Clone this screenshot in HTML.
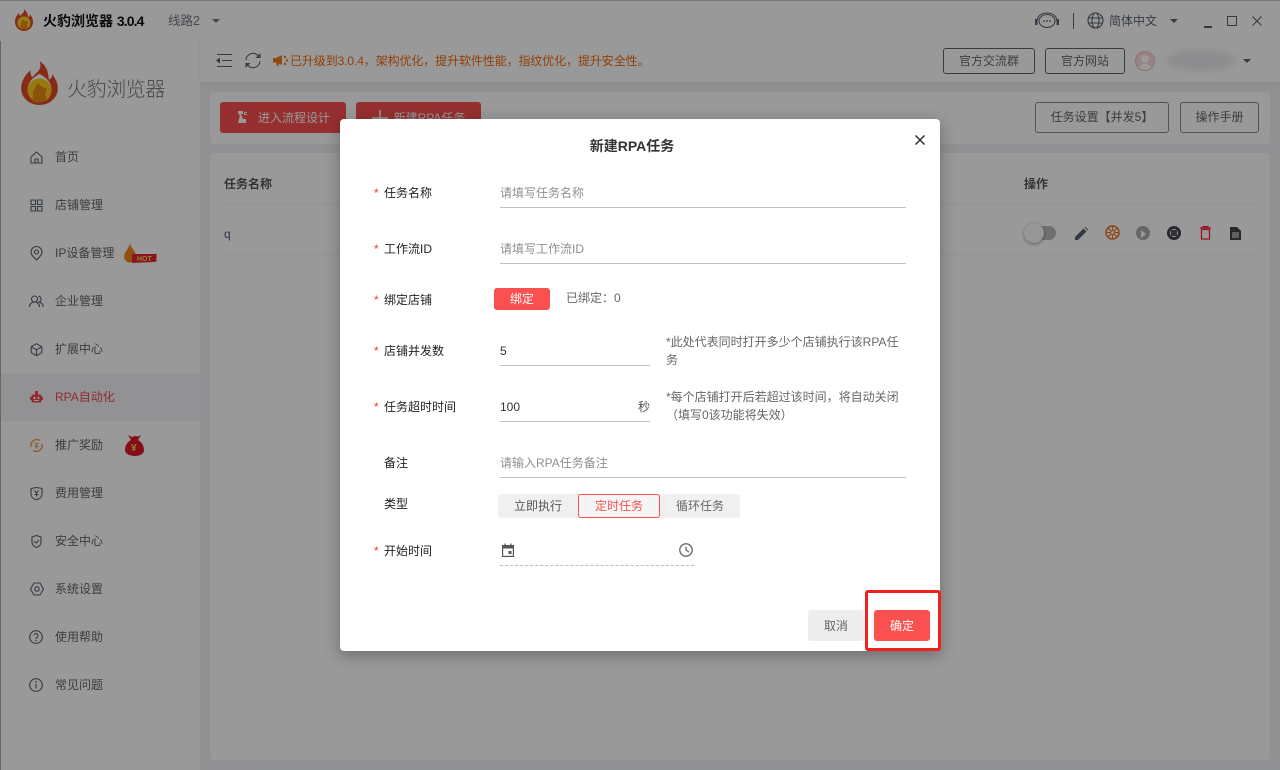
<!DOCTYPE html>
<html lang="zh"><head><meta charset="utf-8"><title>火豹浏览器</title>
<style>
*{box-sizing:border-box;margin:0;padding:0}
html,body{width:1280px;height:770px;overflow:hidden;background:#f0f1f3}
body{position:relative;font:12px/18px "Liberation Sans","Noto Sans CJK SC",sans-serif;color:#333}
.a{position:absolute;white-space:nowrap}
svg{position:absolute;display:block;overflow:visible}
.s{fill:none;stroke:#5a6470;stroke-width:1.1}
.b{position:absolute;border:1px solid #5a6470;border-radius:3px;text-align:center;color:#666a70;background:transparent}
.r{position:absolute;background:#fb5050;border-radius:3px;color:#fff;text-align:center}
.n{position:absolute;left:55px;color:#666;white-space:nowrap}
.i{position:absolute;left:30px;width:13px;height:13px}
.lb{position:absolute;left:44px;color:#222;white-space:nowrap}
.st{position:absolute;left:34px;color:#f33;font-size:12px}
.ln{position:absolute;height:1px;background:#c2c2c2}
.ph{position:absolute;color:#8f8f8f;white-space:nowrap}
.hint{position:absolute;left:326px;color:#666;white-space:nowrap;line-height:18px}
</style></head><body>
<!-- title bar -->
<div class="a" style="left:0;top:0;width:1280px;height:41px;background:#fff;border-top:1px solid #ccc;box-shadow:0 1px 3px rgba(0,0,0,.12)"></div>
<svg style="left:14px;top:8px" width="20" height="24" viewBox="0 0 20 24"><path d="M10 1C11 5 8 5 6 8 5 6 5 5 5 5 2 8 1 11 1 14c0 5 4 9 9 9s9-4 9-9c0-4-2-6-3-8 0 2-1 3-2 3 0-4-2-6-4-8z" fill="#e2492a"/><circle cx="10" cy="15" r="6.5" fill="#fbd01e"/><path d="M6 20c1-3 0-5 2-7l1-2 2 2 3 1-1 3 1 4c-2 1-6 1-8-1z" fill="#e68a10"/></svg>
<div class="a" style="left:43px;top:12px;font-size:14px;font-weight:700;color:#111">火豹浏览器 <span style="letter-spacing:-.9px">3.0.4</span></div>
<div class="a" style="left:168px;top:12px;font-size:12.5px;color:#778">线路2</div>
<div class="a" style="left:212px;top:19px;border:4px solid transparent;border-top:4px solid #778;border-bottom:0"></div>
<svg style="left:1034px;top:11px" width="26" height="20" viewBox="0 0 26 20"><path class="s" d="M3 11C3 5 7 2 13 2s10 3 10 9"/><ellipse class="s" cx="13" cy="10" rx="8" ry="6.5"/><rect x="1" y="8" width="2.5" height="6" fill="#5a6470"/><rect x="22.5" y="8" width="2.5" height="6" fill="#5a6470"/><circle cx="10" cy="10" r=".9" fill="#5a6470"/><circle cx="13" cy="10" r=".9" fill="#5a6470"/><circle cx="16" cy="10" r=".9" fill="#5a6470"/></svg>
<div class="a" style="left:1073px;top:13px;width:1px;height:16px;background:#666"></div>
<svg style="left:1087px;top:12px" width="17" height="17" viewBox="0 0 17 17"><circle class="s" cx="8.5" cy="8.5" r="7.5"/><ellipse class="s" cx="8.5" cy="8.5" rx="3.5" ry="7.5"/><path class="s" d="M1.5 6h14M1.5 11h14"/></svg>
<div class="a" style="left:1109px;top:12px;font-size:12px;color:#5c6570">简体中文</div>
<div class="a" style="left:1170px;top:19px;border:4px solid transparent;border-top:4px solid #5c6570;border-bottom:0"></div>
<div class="a" style="left:1204px;top:26px;width:8px;height:1.5px;background:#5a6470"></div>
<div class="a" style="left:1227px;top:16px;width:10px;height:10px;border:1.5px solid #5a6470"></div>
<svg style="left:1252px;top:16px" width="10" height="10" viewBox="0 0 10 10"><path class="s" d="M.5.5l9 9M9.5.5l-9 9"/></svg>
<!-- sidebar -->
<div class="a" style="left:0;top:41px;width:200px;height:729px;background:#fff;border-left:1px solid #aaa"></div>
<div class="a" style="left:1px;top:373px;width:199px;height:48px;background:#f3f4f7"></div>
<svg style="left:21px;top:61px" width="37" height="44" viewBox="0 0 20 24"><path d="M10 0C12 5 8 6 6 9 5 7 5 6 5 5 2 8 0 11 0 15c0 5 4.500 9 10 9s10-4 10-9c0-4-2-6-3-8 0 2-1 3-2 3 0-5-2-8-5-10z" fill="#e2492a"/><path d="M10 7c-4 2-6.500 5-6.500 8.500S6 22.500 10 22.500s6.500-3 6.500-7C16.500 12 14 9 10 7z" fill="#fff"/><circle cx="10" cy="16" r="6.500" fill="#fbc91e"/><path d="M6 22c1-3-.5-5 1.500-7l1.500-3 2 2 3 1-1 3 1 3c-2 2-6 2-8 1z" fill="#e78a10"/></svg>
<div class="a" style="left:67px;top:77px;font-size:20px;line-height:26px;color:#777;font-weight:300;letter-spacing:-.4px">火豹浏览器</div>
<div class="n" style="top:148px">首页</div>
<svg class="i" style="top:151px" viewBox="0 0 13 13"><path class="s" d="M1 6l5.500-5L12 6v6H1zM5 12V8h3v4"/></svg>
<div class="n" style="top:196px">店铺管理</div>
<svg class="i" style="top:199px" viewBox="0 0 13 13"><path class="s" d="M1 1h4.500v4.500H1zM7.500 1H12v4.500H7.500zM1 7.500h4.500V12H1zM7.500 7.500H12V12H7.500z"/></svg>
<div class="n" style="top:244px">IP设备管理</div>
<svg class="i" style="top:246px;height:15px" viewBox="0 0 13 15"><path class="s" d="M6.500 14C3 10.500 1 8.500 1 6a5.500 5.500 0 0 1 11 0c0 2.500-2 4.500-5.500 8z"/><circle class="s" cx="6.500" cy="6" r="2"/></svg>
<svg style="left:124px;top:243px" width="34" height="21" viewBox="0 0 34 21"><path d="M6 0c0 4 6 8 6 13a6 6 0 0 1-12 1C0 9 5 6 6 0z" fill="#f0881c"/><path d="M8 11h25l-1 2 1 1-1 2 1 2-3 1-22 1z" fill="#e6223a"/><text x="13" y="18" font-size="7" font-weight="700" fill="#fbd84a" font-family="Liberation Sans">HOT</text></svg>
<div class="n" style="top:292px">企业管理</div>
<svg class="i" style="top:295px;width:15px;left:29px" viewBox="0 0 15 13"><circle class="s" cx="5.500" cy="4" r="3"/><path class="s" d="M.5 12c0-3 2-5 5-5s5 2 5 5M9.500 1.200A3 3 0 0 1 10 7c2.500.5 4 2.500 4.200 5"/></svg>
<div class="n" style="top:340px">扩展中心</div>
<svg class="i" style="top:343px" viewBox="0 0 13 13"><path class="s" d="M6.500.7l5.300 3v6l-5.300 3-5.300-3v-6zM1.200 3.700l5.300 3 5.300-3M6.500 6.700v6"/></svg>
<div class="n" style="top:388px;color:#f04a50">RPA自动化</div>
<svg class="i" style="top:391px" viewBox="0 0 13 13"><rect x="1.500" y="3.500" width="10" height="8" rx="1.500" fill="#f04a50"/><path d="M5 0h3v3.500H5zM0 6h1.500v3H0zM11.500 6H13v3h-1.500z" fill="#f04a50"/><circle cx="4.500" cy="7" r="1.100" fill="#fff"/><circle cx="8.500" cy="7" r="1.100" fill="#fff"/><path d="M4 9.500h5" stroke="#fff"/></svg>
<div class="n" style="top:436px">推广奖励</div>
<svg class="i" style="top:438px;width:15px;height:15px;left:29px" viewBox="0 0 15 15"><path d="M2 9A6 6 0 0 1 11 2.500M13 6a6 6 0 0 1-9 6.500" fill="none" stroke="#e8913a" stroke-width="1.300"/><path d="M5.500 4.500l2 2.500 2-2.500M7.500 7v3.500M5.500 8.500h4" fill="none" stroke="#e8913a"/></svg>
<svg style="left:125px;top:434px" width="20" height="23" viewBox="0 0 20 23"><path d="M3 1l4 2 3-1 3 .5 3-1.500-3 5c4 2 6 6 6 10 0 4-4 6-9 6s-10-2-10-6c0-4 2-8 6-10z" fill="#e0182c"/><text x="6" y="17" font-size="10" font-weight="700" fill="#fbd338" font-family="Liberation Sans">¥</text></svg>
<div class="n" style="top:484px">费用管理</div>
<svg class="i" style="top:487px" viewBox="0 0 13 13"><path class="s" d="M1 1.500l5.500-1 5.500 1V7c0 3-2.500 5-5.500 5.700C3.500 12 1 10 1 7z"/><path class="s" d="M4.500 3.500l2 2.500 2-2.500M6.500 6v3.500M4.500 7.500h4" stroke-width="1"/></svg>
<div class="n" style="top:532px">安全中心</div>
<svg class="i" style="top:535px" viewBox="0 0 13 13"><path class="s" d="M2 2l4.500-1.500L11 2v5c0 3-2 4.700-4.500 5.500C4 11.700 2 10 2 7z"/><path class="s" d="M4.200 6.300L6 8l3-3"/></svg>
<div class="n" style="top:580px">系统设置</div>
<svg class="i" style="top:582px;height:14px;width:14px" viewBox="0 0 14 14"><path class="s" d="M4 1h6l3.500 6L10 13H4L.5 7z"/><circle class="s" cx="7" cy="7" r="2.200"/></svg>
<div class="n" style="top:628px">使用帮助</div>
<svg class="i" style="top:630px;width:14px;height:14px;left:29px" viewBox="0 0 14 14"><circle class="s" cx="7" cy="7" r="6.300"/><path class="s" d="M5 5.500a2 2 0 1 1 3 1.800c-.8.500-1 1-1 1.700"/><circle cx="7" cy="10.500" r=".8" fill="#5a6470"/></svg>
<div class="n" style="top:676px">常见问题</div>
<svg class="i" style="top:678px;width:14px;height:14px;left:29px" viewBox="0 0 14 14"><circle class="s" cx="7" cy="7" r="6.300"/><path class="s" d="M7 6v4.500"/><circle cx="7" cy="4" r=".9" fill="#5a6470"/></svg>
<!-- header -->
<div class="a" style="left:200px;top:41px;width:1080px;height:41px;background:#fff;box-shadow:0 1px 3px rgba(0,0,0,.08)"></div>
<svg style="left:216px;top:53px" width="17" height="15" viewBox="0 0 17 15"><path class="s" d="M1 1.500h15M6 7.500h10M1 13.500h15"/><path d="M4 4.500L0 7.500l4 3z" fill="#5a6470"/></svg>
<svg style="left:244px;top:52px" width="18" height="17" viewBox="0 0 18 17"><path class="s" d="M2 8a7 7 0 0 1 12-4.500L15.500 5M16 9a7 7 0 0 1-12 4.500L2.500 12"/><path d="M16.500 1v5h-5zM1.500 16v-5h5z" fill="#5a6470"/></svg>
<svg style="left:273px;top:55px" width="16" height="12" viewBox="0 0 16 12"><path d="M0 3h3l6-3v10L3 7.500H0z" fill="#f07a1c"/><path d="M3 8l1 3h2L5 8z" fill="#f07a1c"/><circle cx="12" cy="2" r="1.200" fill="#f07a1c"/><circle cx="14" cy="5.500" r="1.200" fill="#f07a1c"/><circle cx="12" cy="9" r="1.200" fill="#f07a1c"/></svg>
<div class="a" style="left:290px;top:52px;color:#f06a10;letter-spacing:-.1px">已升级到3.0.4，架构优化，提升软件性能，指纹优化，提升安全性。</div>
<div class="b" style="left:943px;top:48px;width:92px;height:26px;line-height:24px">官方交流群</div>
<div class="b" style="left:1045px;top:48px;width:80px;height:26px;line-height:24px">官方网站</div>
<div class="a" style="left:1135px;top:51px;width:20px;height:20px;border-radius:50%;background:#fbdcdc;border:1px solid #f3b9b9;overflow:hidden"><div class="a" style="left:5px;top:3px;width:8px;height:8px;border-radius:50%;background:#fff"></div><div class="a" style="left:2px;top:12px;width:14px;height:10px;border-radius:50%;background:#fff"></div></div>
<div class="a" style="left:1166px;top:50px;width:70px;height:21px;background:#ececf0;border-radius:50%;filter:blur(3px)"></div>
<div class="a" style="left:1243px;top:59px;border:4px solid transparent;border-top:4px solid #5c6570;border-bottom:0"></div>
<!-- content -->
<div class="a" style="left:210px;top:92px;width:1060px;height:52px;background:#fff;border-radius:4px"></div>
<div class="r" style="left:220px;top:102px;width:126px;height:31px;line-height:32px;padding-left:22px">进入流程设计</div>
<svg style="left:237px;top:110px" width="13" height="14" viewBox="0 0 13 14"><path d="M1 1h5v3H4l2 5h3v4H1l1-4 1-3-2-3zM7 2h3v1H8v1h2v1H7z" fill="#fff"/></svg>
<div class="r" style="left:356px;top:102px;width:125px;height:31px;line-height:32px;padding-left:22px">新建RPA任务</div>
<svg style="left:372px;top:110px" width="16" height="16" viewBox="0 0 16 16"><path d="M8 0v16M0 8h16" stroke="#fff" stroke-width="1.500"/></svg>
<div class="b" style="left:1035px;top:102px;width:134px;height:31px;line-height:29px;border-color:#888;color:#666">任务设置【并发5】</div>
<div class="b" style="left:1180px;top:102px;width:79px;height:31px;line-height:29px;border-color:#888;color:#666">操作手册</div>
<div class="a" style="left:210px;top:153px;width:1060px;height:607px;background:#fff;border-radius:4px"></div>
<div class="a" style="left:220px;top:166px;width:1040px;height:37px;background:#fff;box-shadow:0 1px 2px rgba(0,0,0,.04);border-radius:4px"></div>
<div class="a" style="left:220px;top:216px;width:1040px;height:37px;background:#fff;box-shadow:0 1px 2px rgba(0,0,0,.04);border-radius:4px"></div>
<div class="a" style="left:224px;top:175px;font-weight:700;color:#555">任务名称</div>
<div class="a" style="left:1024px;top:175px;font-weight:700;color:#555">操作</div>
<div class="a" style="left:224px;top:225px;color:#557">q</div>
<div class="a" style="left:1028px;top:226px;width:28px;height:14px;border-radius:7px;background:#bbb"></div>
<div class="a" style="left:1024px;top:223px;width:20px;height:20px;border-radius:50%;background:#fafafa;box-shadow:0 1px 3px rgba(0,0,0,.4)"></div>
<svg style="left:1075px;top:227px" width="13" height="13" viewBox="0 0 13 13"><path d="M0 13V10L8.500 1.500l3 3L3 13zM9.500.5l1-.5 2.500 2.500-.5 1z" fill="#55606e"/></svg>
<svg style="left:1105px;top:225px" width="15" height="15" viewBox="0 0 15 15"><circle cx="7.500" cy="7.500" r="6.500" fill="none" stroke="#f0701c" stroke-width="1.500"/><circle cx="7.500" cy="7.500" r="2" fill="none" stroke="#f0701c"/><path d="M7.500 1v4.500M7.500 9.500V14M1 7.500h4.500M9.500 7.500H14M3 3l3 3M9 9l3 3M12 3L9 6M6 9l-3 3" stroke="#f0701c"/></svg>
<div class="a" style="left:1136px;top:226px;width:14px;height:14px;border-radius:50%;background:#aaa"></div>
<div class="a" style="left:1141px;top:229.500px;border:4px solid transparent;border-left:5px solid #fff;border-right:0"></div>
<div class="a" style="left:1167px;top:226px;width:14px;height:14px;border-radius:50%;background:#fff;border:3px solid #445"></div>
<div class="a" style="left:1171px;top:230px;width:6px;height:6px;background:#555"></div>
<svg style="left:1200px;top:226px" width="11" height="14" viewBox="0 0 11 14"><path d="M0 2h11M3 2V.7h5V2M1.500 3.500h8V13h-8z" fill="none" stroke="#ff1e34" stroke-width="1.300"/></svg>
<svg style="left:1230px;top:227px" width="11" height="13" viewBox="0 0 11 13"><path d="M0 0h7l4 4v9H0z" fill="#444"/><path d="M2 6h7M2 8h7M2 10h7" stroke="#fff" stroke-width=".9"/></svg>
<!-- overlay -->
<div class="a" style="left:0;top:0;width:1280px;height:770px;background:rgba(0,0,0,.4)"></div>
<!-- dialog -->
<div class="a" style="left:340px;top:119px;width:600px;height:532px;background:#fff;border-radius:4px;box-shadow:0 4px 16px rgba(0,0,0,.3);white-space:normal">
<div class="a" style="left:192px;width:200px;top:17px;text-align:center;font-size:14px;line-height:20px;font-weight:700;color:#333">新建RPA任务</div>
<svg style="left:575px;top:16px" width="10" height="10" viewBox="0 0 10 10"><path d="M.5.500l9 9M9.500.500l-9 9" stroke="#333" stroke-width="1.500"/></svg>

<div class="st" style="top:65px">*</div><div class="lb" style="top:65px">任务名称</div>
<div class="ph" style="left:160px;top:65px">请填写任务名称</div><div class="ln" style="left:160px;top:88px;width:406px"></div>

<div class="st" style="top:121px">*</div><div class="lb" style="top:121px">工作流ID</div>
<div class="ph" style="left:160px;top:121px">请填写工作流ID</div><div class="ln" style="left:160px;top:144px;width:406px"></div>

<div class="st" style="top:172px">*</div><div class="lb" style="top:172px">绑定店铺</div>
<div class="r" style="left:154px;top:169px;width:56px;height:22px;line-height:22px">绑定</div>
<div class="a" style="left:226px;top:170px;color:#666">已绑定：0</div>

<div class="st" style="top:223px">*</div><div class="lb" style="top:223px">店铺并发数</div>
<div class="a" style="left:160px;top:223px;color:#333">5</div><div class="ln" style="left:160px;top:246px;width:150px"></div>
<div class="hint" style="top:214px">*此处代表同时打开多少个店铺执行该RPA任<br>务</div>

<div class="st" style="top:279px">*</div><div class="lb" style="top:279px">任务超时时间</div>
<div class="a" style="left:160px;top:279px;color:#333">100</div><div class="a" style="left:298px;top:279px;color:#555">秒</div><div class="ln" style="left:160px;top:302px;width:150px"></div>
<div class="hint" style="top:269px">*每个店铺打开后若超过该时间，将自动关闭<br>（填写0该功能将失效）</div>

<div class="lb" style="top:335px">备注</div>
<div class="ph" style="left:160px;top:335px">请输入RPA任务备注</div><div class="ln" style="left:160px;top:358px;width:406px"></div>

<div class="lb" style="top:376px">类型</div>
<div class="a" style="left:158px;top:375px;width:242px;height:24px;background:#f0f0f0;border-radius:3px"></div>
<div class="a" style="left:174px;top:378px;color:#555">立即执行</div>
<div class="a" style="left:238px;top:375px;width:82px;height:24px;background:#f5f5f5;border:1px solid #fb5050;border-radius:3px;text-align:center;line-height:23px;color:#fb5050">定时任务</div>
<div class="a" style="left:336px;top:378px;color:#666">循环任务</div>

<div class="st" style="top:423px">*</div><div class="lb" style="top:423px">开始时间</div>
<svg style="left:162px;top:424px" width="12" height="14" viewBox="0 0 12 14"><path d="M0 2h2.500V.500h1.200V2h4.600V.500h1.200V2H12v12H0z" fill="#555"/><path d="M1.200 5.500h9.600v7.300H1.200z" fill="#fff"/><rect x="6.500" y="8" width="3" height="3" fill="#555"/></svg>
<svg style="left:339px;top:424px" width="14" height="14" viewBox="0 0 14 14"><circle cx="7" cy="7" r="6.200" fill="none" stroke="#666" stroke-width="1.300"/><path d="M7 3.500V7l3 2" fill="none" stroke="#666" stroke-width="1.200"/></svg>
<div class="a" style="left:160px;top:446px;width:194px;border-top:1px dashed #bbb"></div>

<div class="a" style="left:468px;top:491px;width:56px;height:31px;line-height:32px;background:#ededed;border-radius:3px;text-align:center;color:#666">取消</div>
<div class="r" style="left:534px;top:491px;width:56px;height:31px;line-height:32px">确定</div>
</div>
<div class="a" style="left:865px;top:590px;width:76px;height:61px;border:3px solid #f2201a;border-radius:3px"></div>
</body></html>
